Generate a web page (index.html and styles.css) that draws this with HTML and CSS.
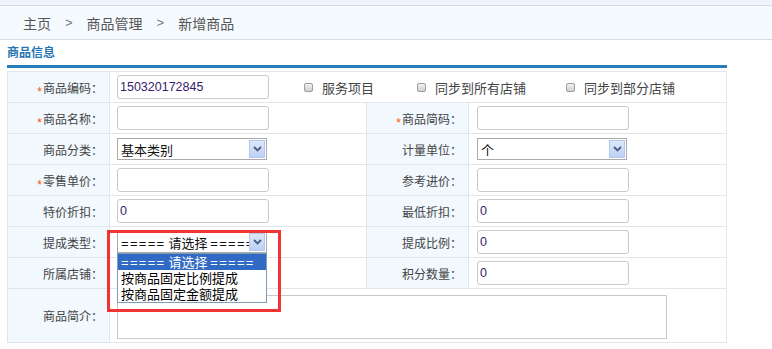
FILE: index.html
```html
<!DOCTYPE html>
<html lang="zh">
<head>
<meta charset="utf-8">
<title>新增商品</title>
<link rel="stylesheet" href="styles.css">
</head>
<body>
<div class="topstrip"></div>
<div class="crumb">
  <span class="crumb-item">主页</span><span class="crumb-sep">&gt;</span><span class="crumb-item">商品管理</span><span class="crumb-sep">&gt;</span><span class="crumb-item">新增商品</span>
</div>
<div class="section">
  <div class="section-title">商品信息</div>
  <div class="form-wrap">
    <table class="form">
      <colgroup>
        <col class="c-label"><col class="c-field"><col class="c-label"><col class="c-field2">
      </colgroup>
      <tr>
        <td class="lbl"><span class="req">*</span>商品编码：</td>
        <td colspan="3" class="fld">
          <div class="row-inline">
            <div class="inp"><span class="val">150320172845</span></div>
            <label class="chk chk1"><span class="box"></span>服务项目</label>
            <label class="chk chk2"><span class="box"></span>同步到所有店铺</label>
            <label class="chk chk3"><span class="box"></span>同步到部分店铺</label>
          </div>
        </td>
      </tr>
      <tr>
        <td class="lbl"><span class="req">*</span>商品名称：</td>
        <td class="fld"><div class="inp"></div></td>
        <td class="lbl"><span class="req">*</span>商品简码：</td>
        <td class="fld fld2"><div class="inp"></div></td>
      </tr>
      <tr>
        <td class="lbl">商品分类：</td>
        <td class="fld"><div class="sel"><span class="sel-text">基本类别</span><span class="sel-btn"><svg width="9" height="6" viewBox="0 0 9 6"><path d="M1 1 L4.5 4.5 L8 1" fill="none" stroke="#4b5c82" stroke-width="1.8"/></svg></span></div></td>
        <td class="lbl">计量单位：</td>
        <td class="fld fld2"><div class="sel"><span class="sel-text">个</span><span class="sel-btn"><svg width="9" height="6" viewBox="0 0 9 6"><path d="M1 1 L4.5 4.5 L8 1" fill="none" stroke="#4b5c82" stroke-width="1.8"/></svg></span></div></td>
      </tr>
      <tr>
        <td class="lbl"><span class="req">*</span>零售单价：</td>
        <td class="fld"><div class="inp"></div></td>
        <td class="lbl">参考进价：</td>
        <td class="fld fld2"><div class="inp"></div></td>
      </tr>
      <tr>
        <td class="lbl">特价折扣：</td>
        <td class="fld"><div class="inp"><span class="val">0</span></div></td>
        <td class="lbl">最低折扣：</td>
        <td class="fld fld2"><div class="inp"><span class="val">0</span></div></td>
      </tr>
      <tr>
        <td class="lbl">提成类型：</td>
        <td class="fld">
          <div class="sel sel-open"><span class="sel-text"><span class="eq">=====</span> 请选择 <span class="eq">=====</span></span><span class="sel-btn"><svg width="9" height="6" viewBox="0 0 9 6"><path d="M1 1 L4.5 4.5 L8 1" fill="none" stroke="#4b5c82" stroke-width="1.8"/></svg></span>
            <div class="popup">
              <div class="opt opt-on"><span class="eq">=====</span> 请选择 <span class="eq">=====</span></div>
              <div class="opt">按商品固定比例提成</div>
              <div class="opt">按商品固定金额提成</div>
            </div>
          </div>
        </td>
        <td class="lbl">提成比例：</td>
        <td class="fld fld2"><div class="inp"><span class="val">0</span></div></td>
      </tr>
      <tr>
        <td class="lbl">所属店铺：</td>
        <td class="fld"></td>
        <td class="lbl">积分数量：</td>
        <td class="fld fld2"><div class="inp"><span class="val">0</span></div></td>
      </tr>
      <tr class="tall">
        <td class="lbl">商品简介：</td>
        <td colspan="3" class="fld"><div class="txt"></div></td>
      </tr>
    </table>
    <div class="highlight"></div>
  </div>
</div>
</body>
</html>
```

FILE: styles.css
```css
html, body {
  margin: 0;
  padding: 0;
  background: #ffffff;
  font-family: "Noto Sans CJK SC", "Liberation Sans", sans-serif;
  font-size: 12px;
  color: #444;
}

.topstrip {
  height: 5px;
  background: #edf5fc;
  border-bottom: 1px solid #d6dce2;
}

.crumb {
  height: 33px;
  line-height: 32px;
  background: #f5faff;
  border-bottom: 1px solid #d8dde2;
  padding-left: 23px;
  font-size: 14px;
  color: #555;
  display: flex;
  align-items: center;
}

.crumb-sep {
  font-family: "Liberation Sans", sans-serif;
  font-size: 13px;
  color: #777;
  margin: 0 14px 0 14px;
}

.section {
  margin: 0 7px;
  width: 720px;
}

.section-title {
  height: 25px;
  line-height: 24px;
  font-weight: bold;
  font-size: 12px;
  color: #2676b4;
  border-bottom: 3px solid #2a7cb9;
}

.form-wrap {
  position: relative;
  margin-top: 3px;
}

.form {
  border-collapse: collapse;
  table-layout: fixed;
  width: 720px;
}

.c-label { width: 102px; }
.c-field { width: 257px; }
.c-field2 { width: 258px; }

.form td {
  border: 1px solid #e2e5e9;
  height: 30px;
  padding: 0;
}

.form tr.tall td {
  height: 53px;
}

.lbl {
  background: #f1f8fe;
  text-align: right;
  padding-right: 6px !important;
  color: #444;
  white-space: nowrap;
}

.req {
  font-family: "Liberation Sans", sans-serif;
  color: #ff5500;
  font-size: 12px;
  position: relative;
  top: 3px;
  margin-right: 1px;
}

.fld {
  padding-left: 7px !important;
}

.fld2 {
  padding-left: 8px !important;
}

.row-inline {
  display: flex;
  align-items: center;
}

.inp {
  box-sizing: border-box;
  width: 152px;
  height: 24px;
  border: 1px solid #cacaca;
  border-radius: 3px;
  background: #fff;
  padding-left: 2px;
  display: flex;
  align-items: center;
}

.val {
  font-family: "Liberation Sans", sans-serif;
  font-size: 12.5px;
  color: #37226e;
}

.chk {
  display: flex;
  align-items: center;
  color: #444;
  font-size: 13px;
}

.chk .box {
  box-sizing: border-box;
  width: 9px;
  height: 9px;
  border: 1px solid #9d9d9d;
  border-radius: 2px;
  background: linear-gradient(#f2f2f2, #cfcfcf);
  margin-right: 9px;
}

.chk1 { margin-left: 35px; }
.chk2 { margin-left: 43px; }
.chk3 { margin-left: 40px; }

.sel {
  position: relative;
  box-sizing: border-box;
  width: 150px;
  height: 22px;
  border: 1px solid #aaaaaa;
  background: #fff;
  display: flex;
  align-items: center;
  padding-left: 3px;
}

.sel-text {
  flex: 1;
  min-width: 0;
  font-size: 13px;
  color: #111;
  white-space: nowrap;
  overflow: hidden;
}

.eq {
  font-family: "Liberation Sans", sans-serif;
  letter-spacing: 1.3px;
}

.sel-btn {
  box-sizing: border-box;
  width: 16px;
  height: 18px;
  margin-right: 1px;
  border: 1px solid #b3c8ec;
  background: linear-gradient(#dbe7fb, #bcd1f6);
  display: flex;
  align-items: center;
  justify-content: center;
  flex: none;
}

.popup {
  position: absolute;
  left: -1px;
  top: 21px;
  width: 150px;
  box-sizing: border-box;
  border: 1px solid #7f9db9;
  background: #fff;
  z-index: 2;
}

.opt {
  height: 16px;
  line-height: 16px;
  font-size: 13px;
  color: #000;
  padding-left: 3px;
  white-space: nowrap;
}

.opt-on {
  background: #316ac5;
  color: #fff;
}

.txt {
  box-sizing: border-box;
  width: 550px;
  height: 44px;
  border: 1px solid #c9c9c9;
  background: #fff;
  margin-top: 2px;
}

.highlight {
  position: absolute;
  left: 100px;
  top: 159px;
  width: 174px;
  height: 82px;
  box-sizing: border-box;
  border: 3px solid #f03434;
  z-index: 3;
  pointer-events: none;
}
```
